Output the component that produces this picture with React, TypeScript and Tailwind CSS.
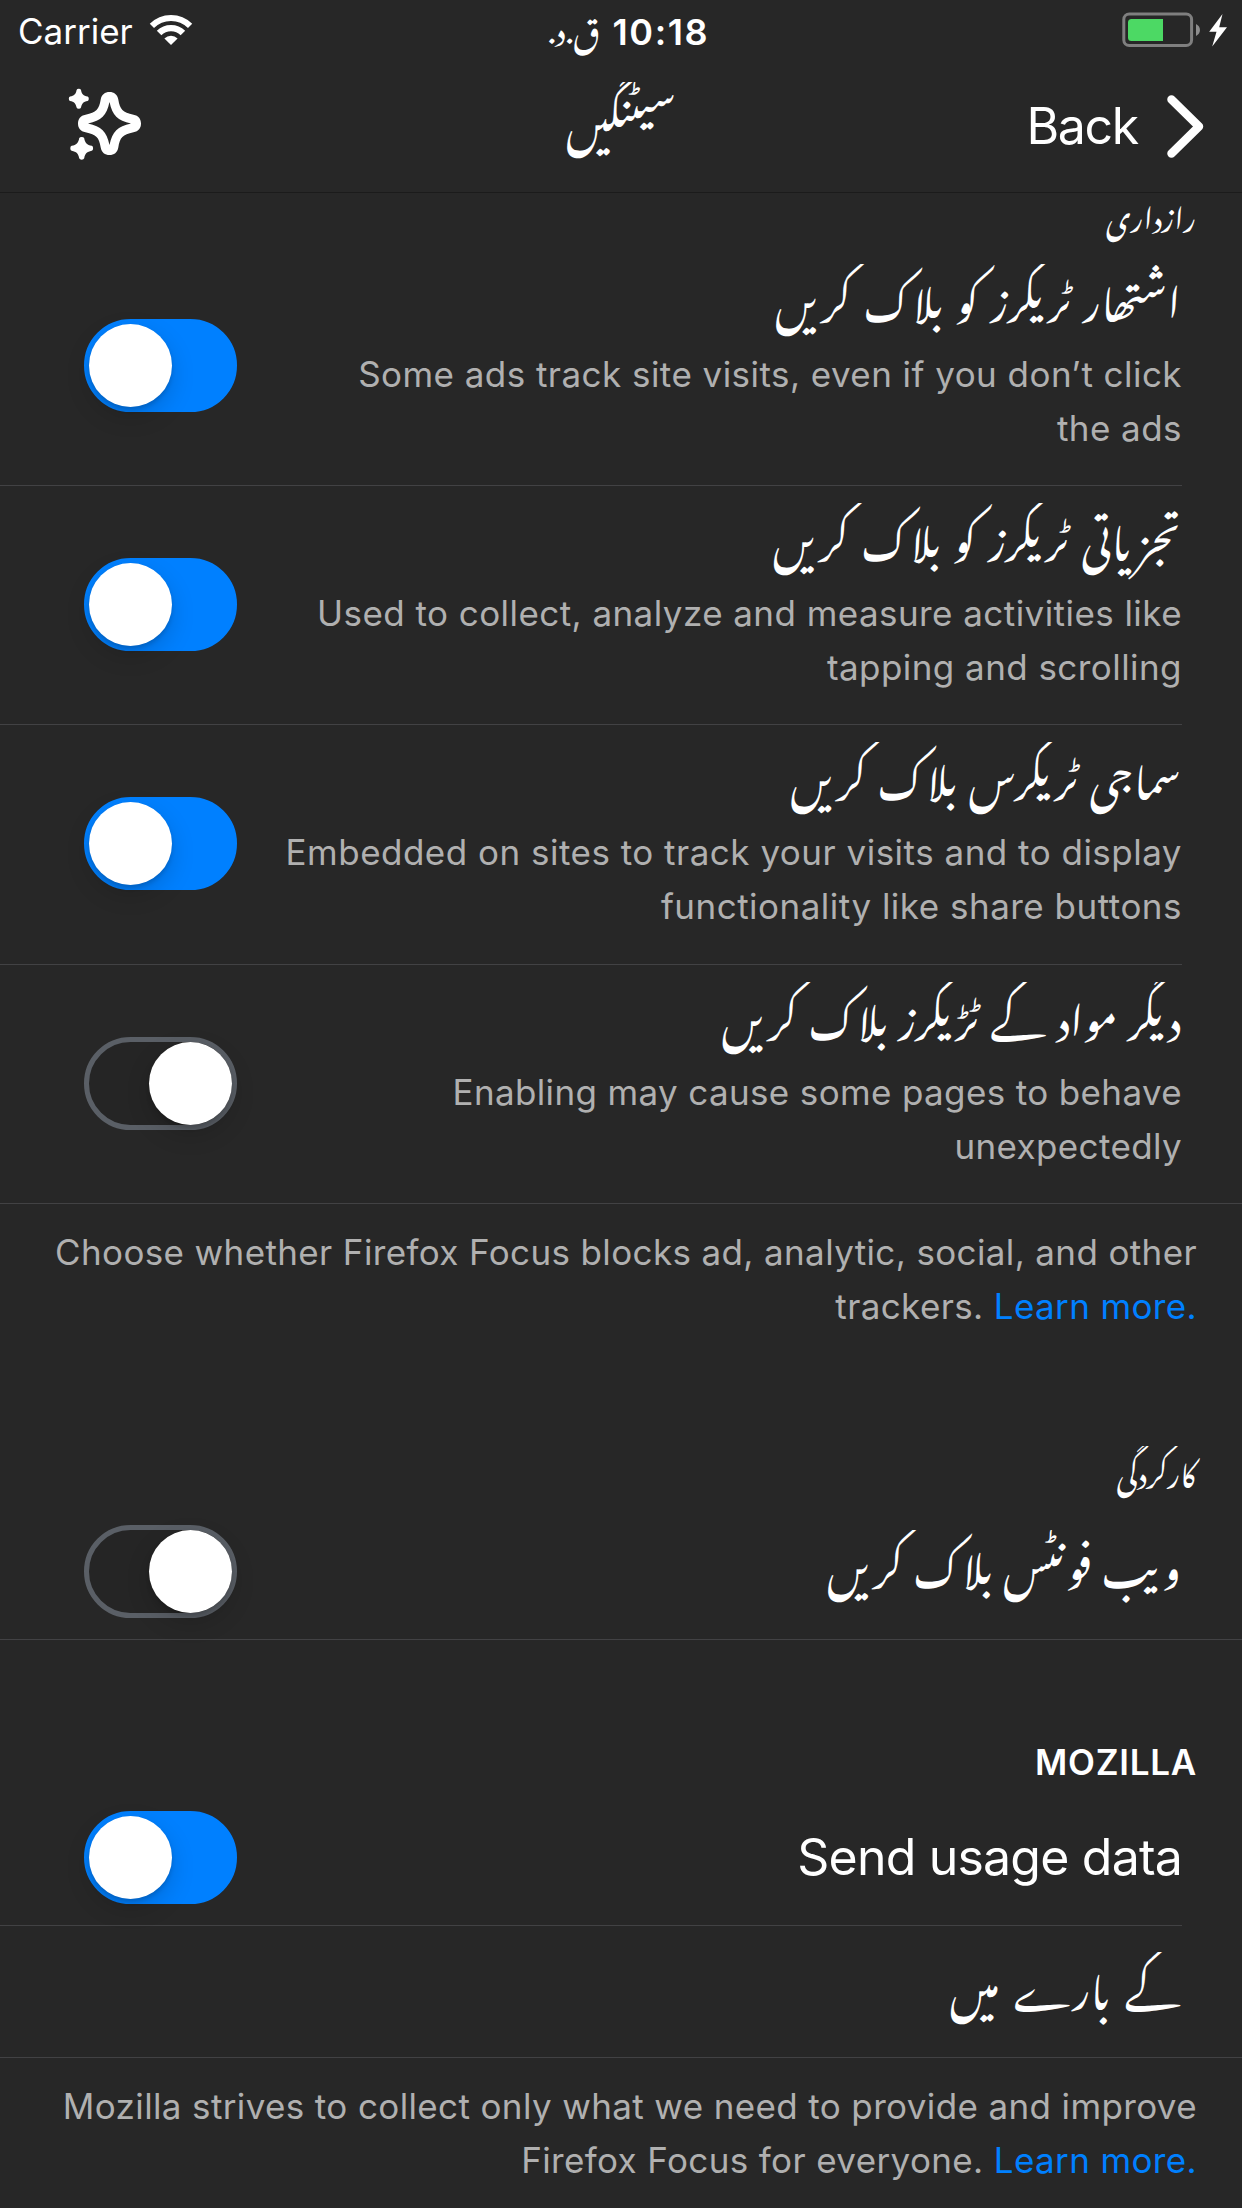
import type { ReactNode } from "react";

function Toggle({ on, className = "" }: { on: boolean; className?: string }) {
  return (
    <div
      dir="ltr"
      role="switch"
      aria-checked={on}
      className={`ml-[84px] flex h-[93px] w-[153px] shrink-0 items-center rounded-full border-[5px] ${
        on ? "justify-start border-[#0080ff] bg-[#0080ff]" : "justify-end border-[#5a5f66] bg-[#252525]"
      } ${className}`}
    >
      <div className="size-[83px] rounded-full bg-white shadow-[0_9px_24px_rgba(0,0,0,0.16),0_3px_4px_rgba(0,0,0,0.14)]" />
    </div>
  );
}

function UrduTitle({ children, spacing = "" }: { children: ReactNode; spacing?: string }) {
  return (
    <h3
      className={`h-[61px] whitespace-nowrap pr-px text-[42px] leading-[61px] font-normal [clip-path:inset(0_-10px_-30px_-10px)] [font-family:'Noto_Nastaliq_Urdu','DejaVu_Sans',sans-serif] ${spacing}`}
    >
      {children}
    </h3>
  );
}

function SectionLabel({ children, className = "" }: { children: ReactNode; className?: string }) {
  return (
    <h2
      className={`h-[46px] pr-[46px] text-[29.7px] leading-[46px] font-normal [clip-path:inset(0_0_-20px_0)] [font-family:'Noto_Nastaliq_Urdu','DejaVu_Sans',sans-serif] ${className}`}
    >
      {children}
    </h2>
  );
}

function TrackerRow({
  title,
  spacing,
  lines,
  on,
  tracking,
  className,
}: {
  title: string;
  spacing: string;
  lines: [string, string];
  on: boolean;
  tracking: string;
  className: string;
}) {
  return (
    <div className={`flex justify-between border-[#424244] ${className}`}>
      <div>
        <UrduTitle spacing={spacing}>{title}</UrduTitle>
        <p dir="ltr" className={`mt-[22px] whitespace-nowrap text-right text-[35px] leading-[54px] text-[#b0b0b0] ${tracking}`}>
          {lines[0]}
          <br />
          {lines[1]}
        </p>
      </div>
      <Toggle on={on} className="mt-[55px]" />
    </div>
  );
}

function Footnote({ children }: { children: ReactNode }) {
  return (
    <p
      dir="ltr"
      className="whitespace-nowrap pt-[21px] pr-[45px] text-right text-[35px] leading-[54px] tracking-[0.37px] text-[#b0b0b0]"
    >
      {children} <a className="text-[#0080ff]">Learn more.</a>
    </p>
  );
}

function WifiIcon() {
  return (
    <svg width="44" height="32" viewBox="0 0 44 32" fill="none" stroke="#fff">
      <path d="M2.9 11.9a27 27 0 0 1 38.2 0" strokeWidth="6" />
      <path d="M10.1 19.1a16.8 16.8 0 0 1 23.8 0" strokeWidth="6.4" />
      <path d="M22 31l-6.6-6.6a9.3 9.3 0 0 1 13.2 0z" fill="#fff" stroke="none" />
    </svg>
  );
}

function BatteryIcon() {
  return (
    <svg width="106" height="36" viewBox="0 0 106 36" fill="none">
      <rect x="1.8" y="2" width="67.8" height="31.5" rx="5.5" stroke="#7f7f7f" strokeWidth="3" />
      <path d="M9.5 7H41v22H9.500a3.500 3.500 0 0 1-3.500-3.500v-15A3.500 3.500 0 0 1 9.500 7z" fill="#4cd964" />
      <path d="M74 12c5.300 2.500 5.300 9.500 0 12z" fill="#8d8d8d" />
      <path d="M100.500 2L87.200 19.800h7.300L90.200 34.600 105 15.200h-7.800z" fill="#fff" />
    </svg>
  );
}

const smallStar =
  "M-2.200-8.800Q-1.800-10 0-10T2.200-8.800C3-4.600 4.600-3 8.800-2.200Q10-1.800 10 0T8.800 2.200C4.600 3 3 4.600 2.200 8.800Q1.800 10 0 10T-2.200 8.800C-3 4.600-4.600 3-8.800 2.200Q-10 1.800-10 0T-8.800-2.200C-4.600-3-3-4.600-2.200-8.800Z";

function SparkleIcon() {
  return (
    <svg width="74" height="74" viewBox="68 87 74 74" fill="#fff">
      <path
        transform="translate(109.500 123.500)"
        fillRule="evenodd"
        d="M-8.800-24C-8-29-4.500-31.500 0-31.500S8-29 8.800-24C10.500-14 13-11 24-8.800C29-8 31.500-4.500 31.500 0S29 8 24 8.800C13 11 10.500 14 8.800 24C8 29 4.500 31.500 0 31.500S-8 29-8.800 24C-10.500 14-13 11-24 8.800C-29 8-31.500 4.500-31.500 0S-29-8-24-8.800C-13-11-10.500-14-8.800-24ZM0-21.500C-3-8-8-3-21.500 0C-8 3-3 8 0 21.500C3 8 8 3 21.500 0C8-3 3-8 0-21.500Z"
      />
      <path transform="translate(78.800 98.700)" d={smallStar} />
      <path transform="translate(81.700 148.300) scale(1.140)" d={smallStar} />
    </svg>
  );
}

export default function App() {
  return (
    <div
      dir="rtl"
      className="h-[2208px] w-[1242px] overflow-hidden bg-[#272727] text-white [font-family:Inter,'Liberation_Sans',sans-serif]"
    >
      <header className="h-[193px] border-b border-[#1b1b1b]">
        <div className="grid h-[62px] grid-cols-3">
          <div dir="ltr" className="col-start-3 row-start-1 flex pl-[18px]">
            <span className="w-[131px] text-[35px] leading-[62px]">Carrier</span>
            <span className="mt-[14px]">
              <WifiIcon />
            </span>
          </div>
          <div className="col-start-2 row-start-1 flex items-baseline justify-center gap-[12px] pl-[15px]">
            <span dir="ltr" className="text-[36px] leading-[62px] font-semibold tracking-[1.6px]">
              10:18
            </span>
            <span className="text-[31.5px] leading-[50px] [font-family:'Noto_Nastaliq_Urdu','DejaVu_Sans',sans-serif]">
              ق.د.
            </span>
          </div>
          <div dir="ltr" className="col-start-1 row-start-1 flex justify-end pt-[12px] pr-[14px]">
            <BatteryIcon />
          </div>
        </div>
        <div className="grid h-[130px] grid-cols-3">
          <div className="flex pr-[37px]">
            <svg
              className="mt-[30px]"
              width="40"
              height="70"
              viewBox="1165 92 40 70"
              fill="none"
              stroke="#fff"
              strokeWidth="8.5"
              strokeLinecap="round"
              strokeLinejoin="round"
            >
              <path d="M1171.500 99.500l27.500 27-27.500 27" />
            </svg>
            <span dir="ltr" className="mt-[34px] mr-[27px] text-[50px] leading-[60px] tracking-[-1.3px]">
              Back
            </span>
          </div>
          <h1 className="mt-[20px] h-[69px] text-center text-[42px] leading-[69px] font-normal [clip-path:inset(0_0_-20px_0)] [font-family:'Noto_Nastaliq_Urdu','DejaVu_Sans',sans-serif]">
            سیٹنگیں
          </h1>
          <div className="flex justify-end pt-[25px] pl-[68px]">
            <SparkleIcon />
          </div>
        </div>
      </header>

      <section>
        <SectionLabel className="-mt-[3px]">رازداری</SectionLabel>
        <div className="mt-[10px] mr-[60px]">
          <TrackerRow
            title="اشتھار ٹریکرز کو بلاک کریں"
            spacing="[word-spacing:6.8px]"
            lines={["Some ads track site visits, even if you don’t click", "the ads"]}
            tracking="tracking-[0.45px]"
            className="h-[240px] border-b pt-[18px]"
            on
          />
          <TrackerRow
            title="تجزیاتی ٹریکرز کو بلاک کریں"
            spacing="[word-spacing:6.8px]"
            lines={["Used to collect, analyze and measure activities like", "tapping and scrolling"]}
            tracking="tracking-[0.44px]"
            className="h-[239px] border-b pt-[17px]"
            on
          />
          <TrackerRow
            title="سماجی ٹریکرس بلاک کریں"
            spacing="[word-spacing:5.6px]"
            lines={["Embedded on sites to track your visits and to display", "functionality like share buttons"]}
            tracking="tracking-[0.49px]"
            className="h-[240px] border-b pt-[17px]"
            on
          />
        </div>
        <div className="border-b border-[#424244] pr-[60px]">
          <TrackerRow
            title="دیگر مواد کے ٹڑیکرز بلاک کریں"
            spacing="[word-spacing:5.3px]"
            lines={["Enabling may cause some pages to behave", "unexpectedly"]}
            tracking="tracking-[0.36px]"
            className="h-[238px] pt-[17px]"
            on={false}
          />
        </div>
        <Footnote>
          Choose whether Firefox Focus blocks ad, analytic, social, and other
          <br />
          trackers.
        </Footnote>
      </section>

      <section className="mt-[113px]">
        <SectionLabel>کارکردگی</SectionLabel>
        <div className="mt-[16px] flex h-[132px] justify-between border-b border-[#424244] pr-[60px]">
          <div className="pt-[22px]">
            <UrduTitle spacing="[word-spacing:4.5px]">ویب فونٹس بلاک کریں</UrduTitle>
          </div>
          <Toggle on={false} className="mt-[17px]" />
        </div>
      </section>

      <section className="mt-[95px]">
        <h2 dir="ltr" className="pr-[45px] text-right text-[35px] leading-[54px] font-semibold tracking-[0.75px]">
          MOZILLA
        </h2>
        <div className="mt-[4px] mr-[60px] flex h-[133px] justify-between border-b border-[#424244]">
          <h3 dir="ltr" className="mt-[34px] text-[50px] leading-[60px] tracking-[-0.8px]">
            Send usage data
          </h3>
          <Toggle on className="mt-[18px]" />
        </div>
        <div className="h-[132px] border-b border-[#424244] pt-[26px] pr-[60px]">
          <UrduTitle spacing="[word-spacing:9px]">کے بارے میں</UrduTitle>
        </div>
        <Footnote>
          Mozilla strives to collect only what we need to provide and improve
          <br />
          Firefox Focus for everyone.
        </Footnote>
      </section>
    </div>
  );
}
